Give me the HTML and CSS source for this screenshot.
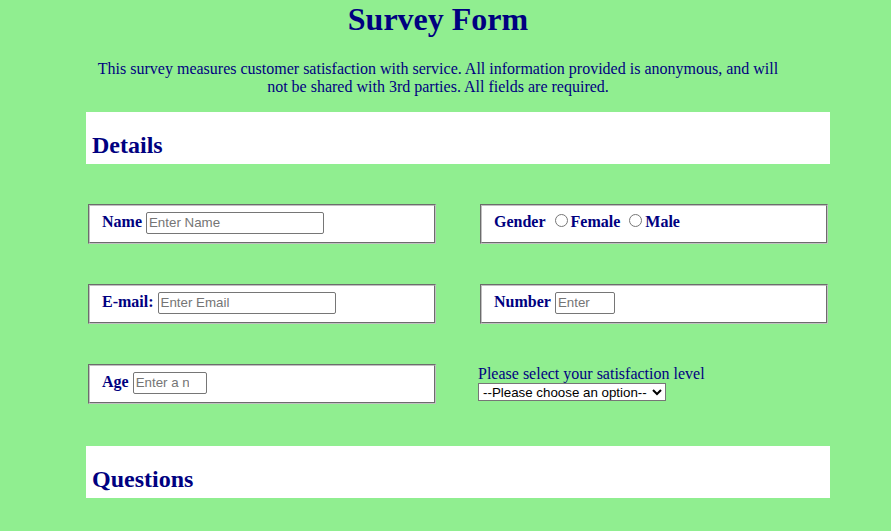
FILE: index.html
```html
<!DOCTYPE html>
<html>
<head>
<meta charset="utf-8">
<title>Survey Form</title>
<link rel="stylesheet" href="styles.css">
</head>
<body>
<div class="page">
  <h1 class="title">Survey Form</h1>
  <p class="intro">This survey measures customer satisfaction with service. All information provided is anonymous, and will not be shared with 3rd parties. All fields are required.</p>
  <form class="form">
    <div class="section-bar"><h2 class="section-title">Details</h2></div>
    <div class="grid">
      <fieldset class="field">
        <label class="lbl" for="name">Name</label>
        <input class="inp inp-name" type="text" id="name" placeholder="Enter Name">
      </fieldset>
      <fieldset class="field">
        <span class="lbl">Gender</span>
        <input class="radio" type="radio" name="gender" id="female"><label class="lbl" for="female">Female</label>
        <input class="radio" type="radio" name="gender" id="male"><label class="lbl" for="male">Male</label>
      </fieldset>
      <fieldset class="field">
        <label class="lbl" for="email">E-mail:</label>
        <input class="inp inp-email" type="email" id="email" placeholder="Enter Email">
      </fieldset>
      <fieldset class="field">
        <label class="lbl" for="number">Number</label>
        <input class="inp inp-number" type="text" id="number" placeholder="Enter">
      </fieldset>
      <fieldset class="field">
        <label class="lbl" for="age">Age</label>
        <input class="inp inp-age" type="number" id="age" placeholder="Enter a number">
      </fieldset>
      <div class="select-wrap">
        <label class="select-lbl" for="sat">Please select your satisfaction level</label>
        <select class="sel" id="sat">
          <option>--Please choose an option--</option>
          <option>Very satisfied</option>
          <option>Satisfied</option>
          <option>Neutral</option>
          <option>Unsatisfied</option>
        </select>
      </div>
    </div>
    <div class="section-bar"><h2 class="section-title">Questions</h2></div>
  </form>
</div>
</body>
</html>
```

FILE: styles.css
```css
html, body {
  margin: 0;
  padding: 0;
}
body {
  background: #90ee90;
  color: #000080;
  font-family: "Liberation Serif", "Times New Roman", serif;
  font-size: 16px;
}
.page {
  width: 876px;
}
.title {
  margin: 1px 0 0;
  text-align: center;
  font-size: 32px;
  font-weight: bold;
  line-height: 37px;
}
.intro {
  width: 700px;
  margin: 22px auto 0;
  text-align: center;
  line-height: 18px;
}
.form {
  width: 744px;
  margin: 16px 0 0 86px;
}
.section-bar {
  background: #ffffff;
  height: 52px;
  box-sizing: border-box;
  padding: 20px 6px 0;
}
.section-title {
  margin: 0;
  font-size: 24px;
  font-weight: bold;
  line-height: 27px;
}
.grid {
  display: grid;
  grid-template-columns: 352px 352px;
  column-gap: 40px;
  row-gap: 40px;
  padding: 40px 0 42px;
}
.field {
  margin: 0 2px;
  background: #ffffff;
  border: 2px groove #c0c0c0;
  padding: 5px 12px 0;
  height: 40px;
  box-sizing: border-box;
  display: block;
  min-width: 0;
  line-height: 22px;
}
.lbl {
  font-weight: bold;
}
.inp {
  font-family: "Liberation Sans", Arial, sans-serif;
  font-size: 13.333px;
  height: 22px;
  box-sizing: border-box;
  margin: 0;
  padding: 1px 2px;
  border: 1px solid #767676;
  border-radius: 2px;
  color: #000;
  vertical-align: baseline;
}
.inp::placeholder {
  color: #757575;
}
.inp-name { width: 178px; }
.inp-email { width: 178px; }
.inp-number { width: 60px; }
.inp-age { width: 74px; }
.radio {
  margin: 3px 3px 0 5px;
  width: 13px;
  height: 13px;
}
.select-wrap {
  display: flex;
  flex-direction: column;
  align-items: flex-start;
}
.select-lbl {
  line-height: 19px;
}
.sel {
  font-family: "Liberation Sans", Arial, sans-serif;
  font-size: 13.333px;
  width: 188px;
  height: 18px;
  margin: 0;
  padding: 0;
  border: 1px solid #767676;
  border-radius: 0;
  background: #fff;
  color: #000;
}
```
